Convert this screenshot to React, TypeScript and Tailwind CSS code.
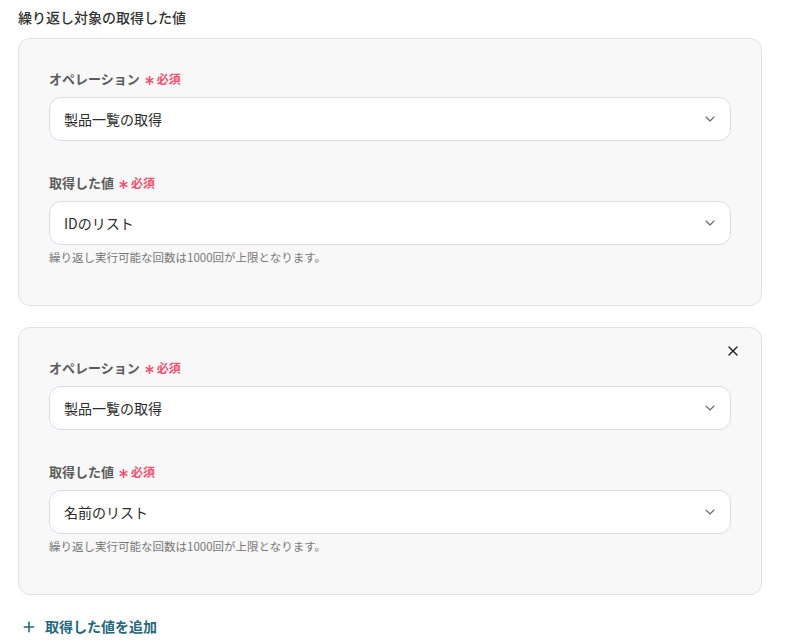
import { ChevronDown, Plus, X } from "lucide-react";

const font = {
  fontFamily: '"Noto Sans CJK JP", "Noto Sans", sans-serif',
};

interface FieldProps {
  label: string;
  value: string;
  hint?: string;
}

// small red asterisk used for required marks
const Asterisk = () => (
  <svg viewBox="0 0 10 10" className="w-[9px] h-[9px] mt-[2px]">
    <g stroke="#f0506e" strokeWidth="1.8" strokeLinecap="round">
      <line x1="5" y1="0.8" x2="5" y2="9.2" />
      <line x1="1.4" y1="2.9" x2="8.6" y2="7.1" />
      <line x1="1.4" y1="7.1" x2="8.6" y2="2.9" />
    </g>
  </svg>
);

const Field = ({ label, value, hint }: FieldProps) => (
  <div className="flex flex-col">
    <div className="flex items-center h-5 gap-[5px]">
      <span className="text-[13px] font-bold text-[#5b5b5b]">{label}</span>
      <span className="text-[12px] font-bold text-[#f0506e] flex items-center gap-[3px]">
        <Asterisk />
        必須
      </span>
    </div>
    <div className="mt-2 h-[44px] bg-white border border-[#dcdce4] rounded-xl flex items-center justify-between pl-[14px] pr-3">
      <span className="text-[14px] text-[#2b2b2b]">{value}</span>
      <ChevronDown className="w-4 h-4 text-[#666]" strokeWidth={1.6} />
    </div>
    {hint && (
      <p className="mt-[5px] text-[11.5px] leading-[14px] text-[#777]">{hint}</p>
    )}
  </div>
);

const LoopCard = ({
  value,
  removable,
}: {
  value: string;
  removable?: boolean;
}) => (
  <div className="relative bg-[#f8f8f8] border border-[#e2e2e2] rounded-xl pt-[30px] pb-[41px] px-[30px]">
    {removable && (
      <X
        className="absolute top-[15px] right-[20px] w-[16px] h-[16px] text-[#222]"
        strokeWidth={2}
      />
    )}
    <div className="flex flex-col gap-[32px]">
      <Field label="オペレーション" value="製品一覧の取得" />
      <Field
        label="取得した値"
        value={value}
        hint="繰り返し実行可能な回数は1000回が上限となります。"
      />
    </div>
  </div>
);

export default function App() {
  return (
    <div className="w-[786px] h-[643px] bg-white pl-[18px] pr-[24px]" style={font}>
      <div className="pt-[7px] h-[38px]">
        <h3 className="text-[14px] font-medium text-[#333] leading-5">
          繰り返し対象の取得した値
        </h3>
      </div>
      <div className="flex flex-col gap-[21px]">
        <LoopCard value="IDのリスト" />
        <LoopCard value="名前のリスト" removable />
      </div>
      <button className="mt-[21px] ml-[3px] flex items-center gap-[8px] text-[#23687e] text-[14px] font-bold">
        <Plus className="w-[16px] h-[16px]" strokeWidth={2.4} />
        取得した値を追加
      </button>
    </div>
  );
}
